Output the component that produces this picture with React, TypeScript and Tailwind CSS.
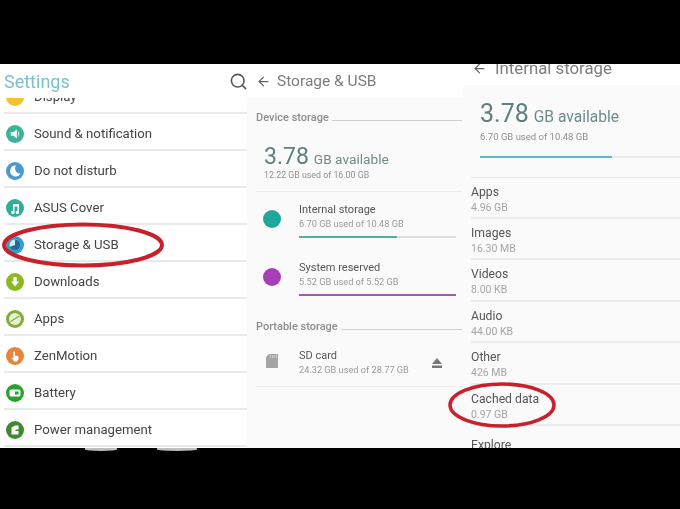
import { ArrowLeft, Search } from 'lucide-react';
import type { ReactNode } from 'react';

const settings: { label: string; color: string; glyph: ReactNode }[] = [
  { label: 'Display', color: 'bg-[#f2c230]', glyph: null },
  {
    label: 'Sound & notification',
    color: 'bg-[#3db39e]',
    glyph: <path d="M5 7.500h2.500L10.500 5v8L7.500 10.500H5z M12 6.500q1.500 2.500 0 5" fill="white" stroke="white" strokeWidth="0.6" />,
  },
  {
    label: 'Do not disturb',
    color: 'bg-[#4b97cf]',
    glyph: <path d="M10 3.500a5.500 5.500 0 1 0 4.500 8 5 5 0 0 1-4.500-8z" fill="white" />,
  },
  {
    label: 'ASUS Cover',
    color: 'bg-[#2fae9c]',
    glyph: <path d="M7 5h6v8.500a1.700 1.700 0 1 1-1.500-1.700V7.500H8.500v6a1.700 1.700 0 1 1-1.500-1.700z" fill="white" />,
  },
  {
    label: 'Storage & USB',
    color: 'bg-[#2e9fd0]',
    glyph: (
      <>
        <circle cx="9" cy="9" r="5.500" fill="#d5eef7" />
        <path d="M9 3.500a5.500 5.500 0 0 1 0 11 5.500 5.500 0 0 1-5.200-3.700L9 9z" fill="#1d6f9c" />
      </>
    ),
  },
  {
    label: 'Downloads',
    color: 'bg-[#8cb91e]',
    glyph: <path d="M7.300 4h3.400v4.500h2.300L9 13.500 5 8.500h2.300z" fill="white" />,
  },
  {
    label: 'Apps',
    color: 'bg-[#7fae35]',
    glyph: (
      <>
        <circle cx="9" cy="9" r="6" fill="#e9f0da" />
        <path d="M4.500 11.500 13.500 6" stroke="#7fae35" strokeWidth="1.300" />
      </>
    ),
  },
  {
    label: 'ZenMotion',
    color: 'bg-[#e8853d]',
    glyph: <path d="M7.500 4.500h1.500v4l3.500 1v2.500l-1.500 2.500H8L5.500 10.500l2 .5z" fill="white" />,
  },
  {
    label: 'Battery',
    color: 'bg-[#27a32b]',
    glyph: (
      <>
        <rect x="3.500" y="5.500" width="11" height="7" rx="1.500" fill="white" />
        <rect x="9" y="7.500" width="3.500" height="3" fill="#27a32b" />
      </>
    ),
  },
  {
    label: 'Power management',
    color: 'bg-[#3f8a2f]',
    glyph: <path d="M5.500 6.500 9 4.500h3.500v4H9.500v1.500h3v3.500h-7z" fill="white" />,
  },
];

const internal = [
  { name: 'Apps', size: '4.96 GB' },
  { name: 'Images', size: '16.30 MB' },
  { name: 'Videos', size: '8.00 KB' },
  { name: 'Audio', size: '44.00 KB' },
  { name: 'Other', size: '426 MB' },
  { name: 'Cached data', size: '0.97 GB' },
];

function SectionTitle({ title }: { title: string }) {
  return (
    <div className="flex h-4 items-center gap-[3px] pr-[1px]">
      <span className="text-[11px] font-medium text-[#8d8d8d]">{title}</span>
      <span className="mt-1 h-px flex-1 bg-[#cfcfcf]" />
    </div>
  );
}

function StorageRow(props: { icon: ReactNode; name: string; used: string; bar?: ReactNode; right?: ReactNode; className: string }) {
  return (
    <div className={`flex items-start ${props.className}`}>
      <div className="mr-[11px] flex w-[32px] shrink-0 justify-center pt-[18px]">{props.icon}</div>
      <div className="flex-1 pr-[7px]">
        <div className="mt-[11px] flex items-center justify-between pr-[14px]">
          <div>
            <p className="text-[11px] leading-[14px] text-[#555]">{props.name}</p>
            <p className="text-[9.200px] leading-[14px] text-[#9a9a9a]">{props.used}</p>
          </div>
          {props.right}
        </div>
        {props.bar}
      </div>
    </div>
  );
}

export default function App() {
  return (
    <div className="relative flex h-[509px] w-[680px] flex-col overflow-hidden bg-black font-['Roboto',sans-serif]">
      <div className="h-16 shrink-0" />

      <div className="flex h-[384px] bg-white blur-[0.5px]">
        <section className="flex w-[247px] shrink-0 flex-col">
          <header className="relative z-10 flex h-[34px] items-center justify-between bg-white pl-1">
            <h1 className="text-[18px] text-[#7cc0cc]">Settings</h1>
            <Search size={19} strokeWidth={2} className="mr-[-1px] text-[#555]" />
          </header>
          <div className="h-[350px] overflow-hidden">
            <div className="-mt-[21px]">
              {settings.map((s) => (
                <div key={s.label} className="ml-1 flex h-[37px] items-center gap-[10px] border-b-2 border-[#e9e9e9] pt-[4px]">
                  <span className={`ml-[2px] flex h-[18px] w-[18px] shrink-0 rounded-full ${s.color}`}>
                    <svg viewBox="0 0 18 18" className="h-[18px] w-[18px]">
                      {s.glyph}
                    </svg>
                  </span>
                  <span className="text-[13.200px] text-[#444]">{s.label}</span>
                </div>
              ))}
            </div>
          </div>
        </section>

        <section className="flex w-[216px] shrink-0 flex-col">
          <header className="flex h-[34px] shrink-0 items-center bg-white pl-[9px]">
            <ArrowLeft size={15} strokeWidth={2} className="text-[#666]" />
            <h2 className="ml-[6px] mt-[1px] text-[15.500px] text-[#7d7d7d]">Storage &amp; USB</h2>
          </header>
          <div className="flex-1 bg-[#fafafa] pl-[9px] pt-[12px]">
            <SectionTitle title="Device storage" />
            <div className="ml-2 mt-[19px] flex h-[24px] items-baseline gap-[5px] text-[#5d7f80]">
              <span className="text-[23px] leading-none">3.78</span>
              <span className="text-[13.700px] leading-none text-[#6d8b8c]">GB available</span>
            </div>
            <p className="ml-2 -mt-px text-[8.800px] leading-[14px] text-[#8f8f8f]">12.22 GB used of 16.00 GB</p>
            <div className="mr-[1px] mt-[9px] border-t border-[#ececec]" />
            <StorageRow
              className="h-[58px]"
              icon={<span className="h-[18px] w-[18px] rounded-full bg-[#1fa899]" />}
              name="Internal storage"
              used="6.70 GB used of 10.48 GB"
              bar={
                <div className="mt-[5px] h-[2px] bg-[#dcdcdc]">
                  <div className="h-[2px] w-[98px] bg-[#56aea3]" />
                </div>
              }
            />
            <StorageRow
              className="h-[58px]"
              icon={<span className="h-[18px] w-[18px] rounded-full bg-[#a63fb8]" />}
              name="System reserved"
              used="5.52 GB used of 5.52 GB"
              bar={<div className="mt-[5px] h-[2px] bg-[#9a5fa8]" />}
            />
            <div className="mt-[11px]">
              <SectionTitle title="Portable storage" />
            </div>
            <StorageRow
              className="mt-[3px] h-[48px]"
              icon={
                <svg viewBox="0 0 12 14" className="-mt-[2px] h-[14px] w-[12px]">
                  <path d="M3 0h9v14H0V3z" fill="#a5a5a5" />
                  <path d="M4.500 1v3M6.500 1v3M8.500 1v3M10.500 1v3" stroke="#e4e4e4" strokeWidth="0.6" />
                </svg>
              }
              name="SD card"
              used="24.32 GB used of 28.77 GB"
              right={
                <svg viewBox="0 0 10 10" className="h-[10px] w-[10px]">
                  <path d="M5 0l5 6H0zM0 7.500h10V10H0z" fill="#777" />
                </svg>
              }
            />
            <div className="mr-[1px] border-t border-[#ececec]" />
          </div>
        </section>

        <section className="flex w-[217px] shrink-0 flex-col">
          <header className="flex h-[21px] shrink-0 items-end overflow-hidden bg-white pl-[9px]">
            <ArrowLeft size={15} strokeWidth={2} className="mb-[9px] text-[#666]" />
            <h2 className="mb-[7px] ml-[8px] text-[16.800px] leading-[20px] text-[#7d7d7d]">Internal storage</h2>
          </header>
          <div className="flex-1 overflow-hidden bg-[#fafafa] pl-[8px]">
            <div className="ml-[9px] mt-[16px] flex h-[28px] items-baseline gap-[5px] text-[#5d7f80]">
              <span className="text-[25px] leading-none">3.78</span>
              <span className="text-[15.600px] leading-none text-[#6d8b8c]">GB available</span>
            </div>
            <p className="ml-[9px] mt-[1px] text-[9.500px] leading-[14px] text-[#8f8f8f]">6.70 GB used of 10.48 GB</p>
            <div className="ml-[9px] mt-[12px] h-[2px] bg-[#ececec]">
              <div className="h-[2px] w-[132px] bg-[#5cb9cc]" />
            </div>
            <div className="mt-[18.600px] border-t border-[#e8e8e8]" />
            {internal.map((row) => (
              <div key={row.name} className="h-[41.400px] border-b-2 border-[#ececec] pt-[7px]">
                <p className="text-[12.200px] leading-[15px] text-[#555]">{row.name}</p>
                <p className="text-[10.500px] leading-[15px] text-[#a5a5a5]">{row.size}</p>
              </div>
            ))}
            <p className="pt-[12px] text-[12.200px] leading-[15px] text-[#555]">Explore</p>
          </div>
        </section>
      </div>

      <div className="relative flex-1">
        <div className="absolute left-[85px] top-0 h-[3px] w-[32px] rounded-b-[50%] bg-[#bdbdbd]" />
        <div className="absolute left-[157px] top-0 h-[3px] w-[40px] rounded-b-[50%] bg-[#bdbdbd]" />
      </div>

      <svg viewBox="0 0 680 509" className="pointer-events-none absolute inset-0 h-[509px] w-[680px]" fill="none">
        <ellipse cx="83" cy="245" rx="79" ry="20.500" stroke="#c9202c" strokeWidth="4" />
        <ellipse cx="502" cy="405" rx="52" ry="21" stroke="#c9202c" strokeWidth="3.500" />
      </svg>
    </div>
  );
}
